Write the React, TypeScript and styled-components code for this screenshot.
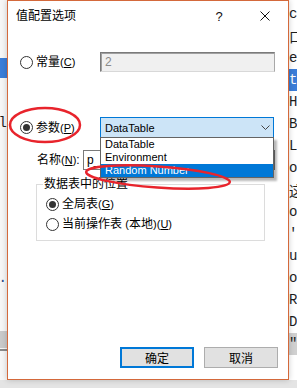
import { createGlobalStyle, styled } from "styled-components";

const GlobalStyle = createGlobalStyle`
  html, body {
    margin: 0;
    padding: 0;
  }
  body {
    width: 297px;
    height: 388px;
    overflow: hidden;
    background: #ffffff;
    font-family: "Liberation Sans", "Noto Sans CJK SC", sans-serif;
    color: #000000;
  }
`;

const Screen = styled.div`
  width: 297px;
  height: 388px;
  display: flex;
  flex-direction: column;
  overflow: hidden;
`;

const ScreenRow = styled.div`
  display: flex;
  height: 380px;
`;

const BottomStrip = styled.div`
  height: 8px;
  background: #e4e4e4;
`;

const LeftStrip = styled.div`
  width: 7px;
  display: flex;
  flex-direction: column;
  background: #f6f6f6;
  overflow: hidden;
`;

const RightStrip = styled.div`
  width: 8px;
  display: flex;
  flex-direction: column;
  padding-top: 3px;
  background: #ffffff;
  overflow: hidden;
`;

const Fragment = styled.div<{ $gap?: number; $bg?: string; $fg?: string; $end?: boolean }>`
  height: 22px;
  margin-top: ${(p) => p.$gap ?? 0}px;
  display: flex;
  align-items: center;
  justify-content: ${(p) => (p.$end ? "flex-end" : "flex-start")};
  white-space: nowrap;
  font-family: "Liberation Mono", "Noto Sans CJK SC", monospace;
  font-size: 14px;
  color: ${(p) => p.$fg ?? "#1e1e1e"};
  background: ${(p) => p.$bg ?? "transparent"};
`;

const BackBar = styled.div<{ $gap: number; $h: number; $bg: string }>`
  margin-top: ${(p) => p.$gap}px;
  height: ${(p) => p.$h}px;
  background: ${(p) => p.$bg};
  flex-shrink: 0;
`;

const Dialog = styled.div`
  position: relative;
  box-sizing: border-box;
  width: 282px;
  height: 380px;
  border: 1px solid #d4693b;
  background: #ffffff;
  display: flex;
  flex-direction: column;
  box-shadow: 0 0 6px rgba(0, 0, 0, 0.2);
`;

const TitleBar = styled.div`
  height: 30px;
  display: flex;
  align-items: center;
  flex-shrink: 0;
`;

const Title = styled.div`
  flex: 1;
  padding-left: 8px;
  font-size: 12px;
  line-height: 16px;
`;

const CaptionButton = styled.div`
  width: 46px;
  height: 30px;
  display: flex;
  align-items: center;
  justify-content: center;
  font-size: 13px;
  color: #111111;
`;

const Body = styled.div`
  flex: 1;
  display: flex;
  flex-direction: column;
  padding: 0 10px 11px 12px;
`;

const OptionRow = styled.div<{ $gap: number; $h?: number }>`
  display: flex;
  align-items: center;
  height: ${(p) => p.$h ?? 20}px;
  margin-top: ${(p) => p.$gap}px;
  flex-shrink: 0;
`;

const RadioLabel = styled.div<{ $width?: number }>`
  display: flex;
  align-items: center;
  gap: 3px;
  width: ${(p) => (p.$width ? `${p.$width}px` : "auto")};
  font-size: 12px;
  line-height: 16px;
  white-space: nowrap;
`;

const RadioCircle = styled.span<{ $checked?: boolean }>`
  box-sizing: border-box;
  width: 13px;
  height: 13px;
  border: 1px solid #333333;
  border-radius: 50%;
  display: flex;
  align-items: center;
  justify-content: center;
  flex-shrink: 0;

  &::after {
    content: "";
    width: 7px;
    height: 7px;
    border-radius: 50%;
    background: ${(p) => (p.$checked ? "#333333" : "transparent")};
  }
`;

const DisabledInput = styled.div`
  box-sizing: border-box;
  width: 175px;
  height: 20px;
  border: 1px solid;
  border-color: #7a7a7a #a8a8a8 #d8d8d8 #7a7a7a;
  box-shadow: inset 1px 1px 0 #a0a0a0;
  background: #f0f0f0;
  color: #8a8a8a;
  font-size: 12px;
  padding-left: 4px;
  display: flex;
  align-items: center;
`;

const ComboWrap = styled.div`
  position: relative;
`;

const Combo = styled.div`
  box-sizing: border-box;
  width: 174px;
  height: 21px;
  border: 1px solid #0078d7;
  background: #cce4f7;
  display: flex;
  align-items: center;
  justify-content: space-between;
  padding: 0 3px 0 4px;
  font-size: 11px;
`;

const DropList = styled.div`
  position: absolute;
  top: calc(100% - 1px);
  left: 0;
  z-index: 2;
  box-sizing: border-box;
  width: 174px;
  border: 1px solid #646464;
  background: #ffffff;
  box-shadow: 3px 3px 2px rgba(0, 0, 0, 0.28);
`;

const DropItem = styled.div<{ $selected?: boolean }>`
  height: 13px;
  line-height: 13px;
  padding-left: 4px;
  font-size: 11px;
  white-space: nowrap;
  background: ${(p) => (p.$selected ? "#0078d7" : "transparent")};
  color: ${(p) => (p.$selected ? "#ffffff" : "#000000")};
`;

const FieldLabel = styled.div`
  width: 46px;
  margin-left: 17px;
  font-size: 12px;
  line-height: 16px;
  white-space: nowrap;
`;

const TextInput = styled.div`
  box-sizing: border-box;
  width: 192px;
  height: 20px;
  border: 1px solid #7a7a7a;
  background: #ffffff;
  font-size: 12px;
  padding-left: 3px;
  display: flex;
  align-items: center;
`;

const GroupBox = styled.div`
  position: relative;
  box-sizing: border-box;
  width: 229px;
  height: 57px;
  margin: 14px 0 0 16px;
  border: 1px solid #dcdcdc;
  padding: 9px 0 0 9px;
  display: flex;
  flex-direction: column;
  flex-shrink: 0;
`;

const GroupTitle = styled.div`
  position: absolute;
  top: -9px;
  left: 6px;
  padding: 0 1px;
  background: #ffffff;
  font-size: 12px;
  line-height: 16px;
`;

const GroupRow = styled.div`
  height: 20px;
  display: flex;
  align-items: center;
`;

const ButtonRow = styled.div`
  margin-top: auto;
  display: flex;
  justify-content: flex-end;
  gap: 10px;
`;

const DialogButton = styled.div<{ $default?: boolean }>`
  box-sizing: border-box;
  width: 74px;
  height: 21px;
  border: ${(p) => (p.$default ? "2px solid #0078d7" : "1px solid #adadad")};
  background: #e1e1e1;
  display: flex;
  align-items: center;
  justify-content: center;
  font-size: 12px;
`;

const Annotation = styled.svg<{ $left: number; $top: number }>`
  position: absolute;
  left: ${(p) => p.$left}px;
  top: ${(p) => p.$top}px;
  z-index: 3;
  overflow: visible;
  pointer-events: none;
`;

const Mnemonic = styled.span`
  font-size: 11px;

  u {
    text-decoration-thickness: 1px;
    text-underline-offset: 1px;
  }
`;

const Key = ({ k }: { k: string }) => (
  <Mnemonic>
    (<u>{k}</u>)
  </Mnemonic>
);

export default function App() {
  return (
    <>
      <GlobalStyle />
      <Screen>
        <ScreenRow>
          <LeftStrip>
            <BackBar $gap={58} $h={20} $bg="#3b7dd8" />
            <Fragment $gap={34} $end>
              el
            </Fragment>
            <Fragment $gap={133} $end $fg="#2a4a8a">
              ...
            </Fragment>
            <BackBar $gap={42} $h={17} $bg="#c9c9c9" />
            <BackBar $gap={1} $h={2} $bg="#8a8a8a" />
          </LeftStrip>

          <Dialog>
            <TitleBar>
              <Title>值配置选项</Title>
              <CaptionButton>?</CaptionButton>
              <CaptionButton>
                <svg width="10" height="10" viewBox="0 0 10 10">
                  <path d="M0.5 0.5 L9.5 9.5 M9.5 0.5 L0.5 9.5" stroke="#111" strokeWidth="1" />
                </svg>
              </CaptionButton>
            </TitleBar>

            <Body>
              <OptionRow $gap={21}>
                <RadioLabel $width={80}>
                  <RadioCircle />
                  <span>
                    常量<Key k="C" />
                  </span>
                </RadioLabel>
                <DisabledInput>2</DisabledInput>
              </OptionRow>

              <OptionRow $gap={45} $h={21}>
                <RadioLabel $width={80}>
                  <RadioCircle $checked />
                  <span>
                    参数<Key k="P" />
                  </span>
                </RadioLabel>
                <ComboWrap>
                  <Combo>
                    <span>DataTable</span>
                    <svg width="9" height="5" viewBox="0 0 9 5">
                      <polyline points="0.5,0.5 4.5,4.5 8.5,0.5" fill="none" stroke="#444" strokeWidth="1" />
                    </svg>
                  </Combo>
                  <DropList>
                    <DropItem>DataTable</DropItem>
                    <DropItem>Environment</DropItem>
                    <DropItem $selected>Random Number</DropItem>
                  </DropList>
                </ComboWrap>
              </OptionRow>

              <OptionRow $gap={12}>
                <FieldLabel>
                  名称<Key k="N" />:
                </FieldLabel>
                <TextInput>p_</TextInput>
              </OptionRow>

              <GroupBox>
                <GroupTitle>数据表中的位置</GroupTitle>
                <GroupRow>
                  <RadioLabel>
                    <RadioCircle $checked />
                    <span>
                      全局表<Key k="G" />
                    </span>
                  </RadioLabel>
                </GroupRow>
                <GroupRow>
                  <RadioLabel>
                    <RadioCircle />
                    <span>
                      当前操作表 <Mnemonic>(</Mnemonic>本地<Mnemonic>)</Mnemonic>
                      <Key k="U" />
                    </span>
                  </RadioLabel>
                </GroupRow>
              </GroupBox>

              <ButtonRow>
                <DialogButton $default>确定</DialogButton>
                <DialogButton>取消</DialogButton>
              </ButtonRow>
            </Body>

            <Annotation $left={0} $top={104} width="76" height="40" viewBox="0 0 76 40">
              <ellipse cx="37" cy="20" rx="35" ry="17" fill="none" stroke="#e8242c" strokeWidth="2.5" />
            </Annotation>
            <Annotation $left={75} $top={161} width="150" height="30" viewBox="0 0 150 30">
              <ellipse
                cx="75"
                cy="15"
                rx="72"
                ry="10.5"
                fill="none"
                stroke="#e8242c"
                strokeWidth="2.5"
                transform="rotate(4 75 15)"
              />
            </Annotation>
          </Dialog>

          <RightStrip>
            <Fragment>ca</Fragment>
            <Fragment>口:</Fragment>
            <Fragment>e_</Fragment>
            <Fragment $bg="#3b7dd8" $fg="#ffffff">
              ts
            </Fragment>
            <Fragment>H</Fragment>
            <Fragment>B</Fragment>
            <Fragment>L</Fragment>
            <Fragment>o</Fragment>
            <Fragment>这</Fragment>
            <Fragment>o</Fragment>
            <Fragment>'</Fragment>
            <Fragment>u</Fragment>
            <Fragment>o</Fragment>
            <Fragment>R</Fragment>
            <Fragment>DI</Fragment>
            <Fragment $bg="#d0d0d0">"</Fragment>
          </RightStrip>
        </ScreenRow>
        <BottomStrip />
      </Screen>
    </>
  );
}
